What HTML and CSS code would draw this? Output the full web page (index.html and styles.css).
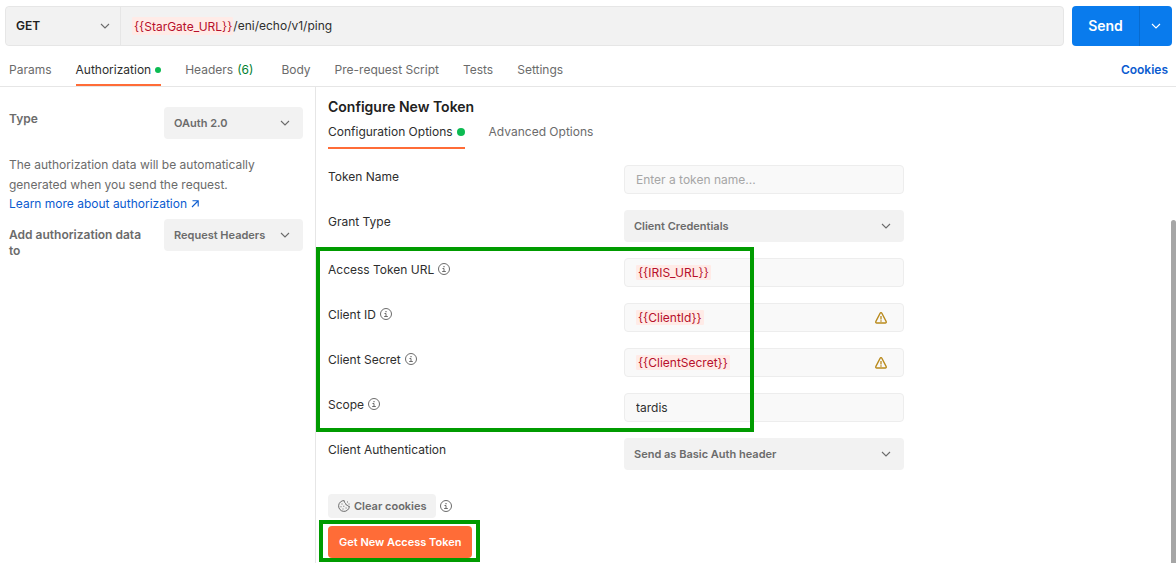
FILE: index.html
```html
<!DOCTYPE html>
<html lang="en">
<head>
<meta charset="utf-8">
<title>API request authorization</title>
<link rel="stylesheet" href="styles.css">
</head>
<body>
<svg class="symbols" aria-hidden="true">
  <symbol id="chevron" viewBox="0 0 12 12"><path d="M2 4l4 4 4-4" fill="none" stroke="currentColor" stroke-width="1.1"/></symbol>
  <symbol id="info" viewBox="0 0 12 12"><circle cx="6" cy="6" r="5.5" fill="none" stroke="currentColor"/><path d="M4.5 5.5H6V8.5M4.200 8.500h3.600" fill="none" stroke="currentColor"/><path d="M5.400 3h1.200v1.200H5.400z" fill="currentColor"/></symbol>
  <symbol id="warning" viewBox="0 0 12 12"><path d="M5.200 1.100L.8 9.600Q.4 11 1.800 11h8.400Q11.600 11 11.200 9.600L6.800 1.100Q6 .1 5.200 1.100z" fill="none" stroke="currentColor" stroke-width="1.300"/><path d="M6 4v3.600M6 8.300v1.500" fill="none" stroke="currentColor" stroke-width="1.300"/></symbol>
</svg>
<div class="app">
  <form class="request">
    <div class="request-line">
      <div class="picker method">
        <select aria-label="Method"><option>GET</option></select>
        <svg class="icon"><use href="#chevron"/></svg>
      </div>
      <div class="url">
        <input class="variable" aria-label="URL host variable" size="15" value="{{StarGate_URL}}">
        <input class="path" aria-label="URL path" value="/eni/echo/v1/ping">
      </div>
    </div>
    <div class="send">
      <button type="button" class="send-main">Send</button>
      <button type="button" class="send-more" aria-label="More send options"><svg class="icon"><use href="#chevron"/></svg></button>
    </div>
  </form>
  <nav class="tabs">
    <button class="tab">Params</button>
    <button class="tab active">Authorization<span class="dot small"></span></button>
    <button class="tab">Headers <span class="count">(6)</span></button>
    <button class="tab">Body</button>
    <button class="tab">Pre-request Script</button>
    <button class="tab">Tests</button>
    <button class="tab">Settings</button>
    <a class="cookies" href="#">Cookies</a>
  </nav>
  <main class="content">
    <aside class="sidebar">
      <div class="side-row">
        <label for="auth-type">Type</label>
        <div class="picker">
          <select id="auth-type"><option>OAuth 2.0</option></select>
          <svg class="icon"><use href="#chevron"/></svg>
        </div>
      </div>
      <p class="help">The authorization data will be automatically generated when you send the request.
        <a href="#">Learn more about authorization <svg class="arrow" viewBox="0 0 8 8" aria-hidden="true"><path d="M1.5.8h5.7v5.7M7 1L1 7" fill="none" stroke="currentColor" stroke-width="1.1"/></svg></a></p>
      <div class="side-row lower">
        <label for="auth-target">Add authorization data to</label>
        <div class="picker">
          <select id="auth-target"><option>Request Headers</option></select>
          <svg class="icon"><use href="#chevron"/></svg>
        </div>
      </div>
    </aside>
    <section class="panel">
      <h1>Configure New Token</h1>
      <div class="subtabs">
        <button class="subtab active">Configuration Options<span class="dot"></span></button>
        <button class="subtab">Advanced Options</button>
      </div>
      <form class="fields">
        <div class="row">
          <label for="token-name">Token Name</label>
          <div class="field"><input id="token-name" class="plain" placeholder="Enter a token name..."></div>
        </div>
        <div class="row">
          <label for="grant">Grant Type</label>
          <div class="picker">
            <select id="grant"><option>Client Credentials</option></select>
            <svg class="icon"><use href="#chevron"/></svg>
          </div>
        </div>
        <div class="group">
          <div class="row">
            <label for="token-url">Access Token URL <svg class="info"><use href="#info"/></svg></label>
            <div class="field"><input id="token-url" class="variable" size="11" value="{{IRIS_URL}}"></div>
          </div>
          <div class="row">
            <label for="client-id">Client ID <svg class="info"><use href="#info"/></svg></label>
            <div class="field"><input id="client-id" class="variable" size="11" value="{{ClientId}}"><svg class="warning"><use href="#warning"/></svg></div>
          </div>
          <div class="row">
            <label for="client-secret">Client Secret <svg class="info"><use href="#info"/></svg></label>
            <div class="field"><input id="client-secret" class="variable" size="15" value="{{ClientSecret}}"><svg class="warning"><use href="#warning"/></svg></div>
          </div>
          <div class="row">
            <label for="scope">Scope <svg class="info"><use href="#info"/></svg></label>
            <div class="field"><input id="scope" class="plain" value="tardis"></div>
          </div>
          <div class="highlight"></div>
        </div>
        <div class="row">
          <label for="client-auth">Client Authentication</label>
          <div class="picker">
            <select id="client-auth"><option>Send as Basic Auth header</option></select>
            <svg class="icon"><use href="#chevron"/></svg>
          </div>
        </div>
      </form>
      <div class="clear-row">
        <button class="clear"><svg class="cookie" viewBox="0 0 12 12" aria-hidden="true"><path d="M6.2.6A5.4 5.4 0 1 0 11.4 6.3Q9.8 6.6 9.3 5.2 7.4 5.2 7.6 3.3 5.9 2.6 6.2.6z" fill="none" stroke="currentColor"/><path d="M3.500 3.400h1v1h-1zM2.500 6.300h1v1h-1zM5.300 5.700h1v1h-1zM4.500 8.500h1v1h-1zM7.600 7.600h1v1h-1zM9 1.500h1v1H9zM10.500 3.500h1v1h-1z" fill="currentColor"/></svg>Clear cookies</button>
        <svg class="info"><use href="#info"/></svg>
      </div>
      <div class="submit">
        <button class="get-token">Get New Access Token</button>
        <div class="highlight"></div>
      </div>
      <div class="scroll-thumb"></div>
    </section>
  </main>
</div>
</body>
</html>
```
FILE: styles.css
```css
* { box-sizing: border-box; }

body {
  margin: 0;
  overflow: hidden;
  background: #fff;
  color: #6b6b6b;
  font: 12px/16px Inter, "Liberation Sans", sans-serif;
}

button, input, select { font: inherit; color: inherit; }
button { border: 0; padding: 0; background: none; cursor: pointer; }
input { border: 0; padding: 0; margin: 0; min-width: 0; background: none; outline: 0; }
a { color: #0a5bd0; text-decoration: none; }

.symbols { position: absolute; width: 0; height: 0; }
.icon, .info, .warning, .cookie { width: 12px; height: 12px; flex: none; }

.app { display: flex; flex-direction: column; height: 100vh; }

/* Request line */
.request { display: flex; gap: 8px; padding: 6px 4px 0 5px; }
.request-line {
  display: flex;
  flex: 1;
  height: 40px;
  border: 1px solid #e6e6e6;
  border-radius: 4px;
  background: #f2f2f2;
}
.url { display: flex; flex: 1; align-items: center; padding-left: 11px; }
.path { flex: 1; color: #2e2e2e; }

.variable {
  field-sizing: content;
  height: 15px;
  padding: 0 2px;
  border-radius: 1px;
  background: #ffebe7;
  color: #b70f2b;
}
.url .variable { height: 18px; padding: 0 1px 0 2px; }

.picker { display: grid; align-items: center; }
.picker > * { grid-area: 1 / 1; }
.picker select {
  appearance: none;
  width: 100%;
  height: 32px;
  padding: 0 30px 0 10px;
  border: 0;
  border-radius: 4px;
  background: #f2f2f2;
  font-size: 11px;
  font-weight: 600;
}
.picker .icon { justify-self: end; margin-right: 12px; pointer-events: none; }
.picker.method { width: 115px; border-right: 1px solid #e6e6e6; }
.picker.method select { height: 38px; color: #212121; font-size: 12px; }
.picker.method .icon { margin-right: 9px; }

.send {
  display: flex;
  width: 100px;
  border-radius: 4px;
  overflow: hidden;
  background: #097bed;
  color: #fff;
}
.send-main { flex: 1; font-size: 14px; font-weight: 600; }
.send-more { display: grid; place-items: center; width: 33px; border-left: 1px solid #076bd0; }

/* Request tabs */
.tabs {
  display: flex;
  gap: 24px;
  height: 41px;
  padding: 8px 8px 0 9px;
  border-bottom: 1px solid #e6e6e6;
}
.tab { display: flex; align-items: center; gap: 4px; padding-top: 2px; border-bottom: 2px solid transparent; }
.tab.active, .subtab.active { color: #2e2e2e; border-color: #ff6c37; }
.count { margin-right: 4px; color: #007f31; }
.dot { width: 8px; height: 8px; border-radius: 50%; background: #0cbb52; }
.dot.small { width: 6px; height: 6px; }
.cookies { margin-left: auto; align-self: center; font-weight: 600; }

.content { display: flex; flex: 1; min-height: 0; }

/* Sidebar */
.sidebar { width: 316px; flex: none; padding: 20px 12px 0 9px; border-right: 1px solid #e6e6e6; }
.side-row { display: grid; grid-template-columns: 1fr 139px; gap: 16px; align-items: start; font-weight: 600; }
.side-row label { padding-top: 4px; }
.side-row.lower label { padding-top: 8px; }
.help { margin: 16px 0 6px; line-height: 20px; }
.help a { display: block; line-height: 18px; }
.arrow { width: 8px; height: 8px; margin-left: 1px; }

/* Token panel */
.panel { position: relative; flex: 1; padding: 12px; color: #2e2e2e; overflow: hidden; }
h1 { margin: 0; color: #212121; font-size: 14px; line-height: 16px; font-weight: 600; }
.subtabs { display: flex; gap: 24px; height: 34px; margin-bottom: 16px; }
.subtab {
  display: flex;
  align-items: center;
  gap: 4px;
  padding-top: 2px;
  border-bottom: 2px solid transparent;
  color: #6b6b6b;
}
.fields, .group { display: flex; flex-direction: column; gap: 16px; }
.group { position: relative; }
.fields { width: 576px; max-width: 100%; }
.row { display: grid; grid-template-columns: 1fr 280px; align-items: start; }
.row label { display: flex; align-items: center; gap: 4px; padding-top: 4px; }
.row .picker { color: #6b6b6b; }
.info { color: #6b6b6b; }
.row .info { margin-bottom: 2px; }
.field {
  display: flex;
  align-items: center;
  height: 29px;
  padding: 0 16px 0 11px;
  border: 1px solid #ededed;
  border-radius: 4px;
  background: #f9f9f9;
}
.plain { flex: 1; height: 27px; }
.plain::placeholder { color: #a6a6a6; opacity: 1; }
.warning { margin-left: auto; color: #b98a1c; }

.clear-row { display: flex; align-items: center; gap: 4px; margin: 24px 0 8px; }
.clear {
  display: flex;
  align-items: center;
  gap: 4px;
  height: 24px;
  padding: 0 9px 0 10px;
  border-radius: 4px;
  background: #f2f2f2;
  color: #6b6b6b;
  font-size: 11px;
  font-weight: 600;
}
.submit { position: relative; width: max-content; }
.get-token {
  height: 32px;
  padding: 0 11px;
  border-radius: 4px;
  background: #ff6c37;
  color: #fff;
  font-size: 11px;
  font-weight: 600;
}

/* Call-out frames laid over the form */
.highlight { position: absolute; border: 4px solid #009b00; pointer-events: none; }
.group .highlight { inset: -11px 150px -10px -12px; }
.submit .highlight { inset: -6px -8px -4px -9px; }

.scroll-thumb {
  position: absolute;
  top: 133px;
  right: 0;
  bottom: 0;
  width: 5px;
  border-radius: 3px 3px 0 0;
  background: #a6a6a6;
}
```
